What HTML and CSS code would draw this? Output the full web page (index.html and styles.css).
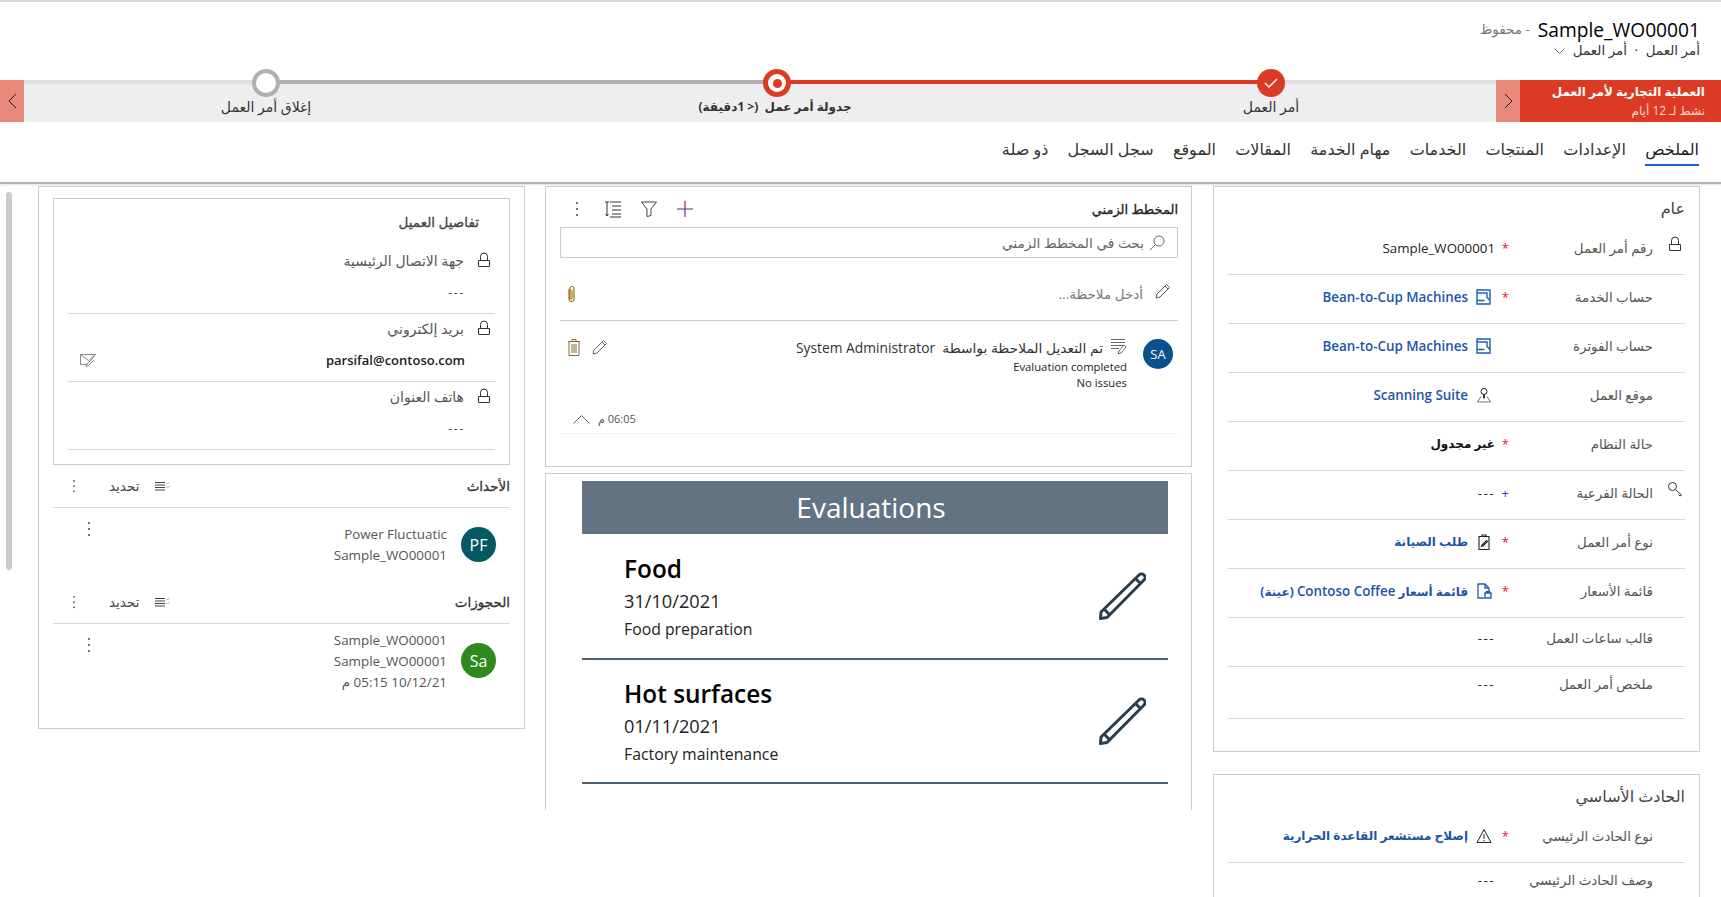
FILE: index.html
```html
<!DOCTYPE html>
<html lang="ar" dir="rtl">
<head>
    <meta charset="UTF-8">
    <title>Sample_WO00001</title>
    <link rel="stylesheet" href="styles.css">
</head>
<body>

<svg class="sprites" width="0" height="0" aria-hidden="true">
  <symbol id="i-lock" viewBox="0 0 16 16"><path d="M2.500 8.500h11v6h-11zM4.500 8.500V4.500a3.500 3.500 0 0 1 7 0v4" fill="none" stroke="currentColor"/></symbol>
  <symbol id="i-account" viewBox="0 0 16 16"><path d="M1 1h13v14H1zM1 4h10v4.500l3.500 3.500M1 11.500h7.500" fill="none" stroke="currentColor" stroke-width="1.400"/></symbol>
  <symbol id="i-pin" viewBox="0 0 16 16"><circle cx="8" cy="4.500" r="3" fill="none" stroke="currentColor"/><path d="M8 7.500v4" stroke="currentColor" stroke-width="1.800"/><path d="M5 9.500 1.500 15h13L11 9.500" fill="none" stroke="#777"/></symbol>
  <symbol id="i-key" viewBox="0 0 16 16"><circle cx="5.500" cy="5.500" r="4" fill="none" stroke="currentColor"/><path d="m8.500 8.500 6 5.500-1.500 1-1.500-1.500" fill="none" stroke="currentColor"/></symbol>
  <symbol id="i-clip" viewBox="0 0 16 16"><path d="M3 2.500h10v13H3zM6 2.500V1h4v1.500M6 11l4.500-4.500 1 1L7 12l-1.500.5z" fill="none" stroke="currentColor" stroke-width="1.100"/></symbol>
  <symbol id="i-price" viewBox="0 0 16 16"><path d="M8 15H2V1h7l4 4v3M9 1v4h4" fill="none" stroke="currentColor" stroke-width="1.300"/><path d="M9 10h6v5H9zM10.500 10V8.500h3V10" fill="none" stroke="currentColor" stroke-width="1.400"/></symbol>
  <symbol id="i-warn" viewBox="0 0 16 16"><path d="M8 1.500 15 14.500H1zM8 6v5M8 12v1.300" fill="none" stroke="currentColor"/></symbol>
  <symbol id="i-pencil" viewBox="0 0 16 16"><path d="M11.500 1.500 14.500 4.500 5 14l-4 1 1-4zM10 3l3 3" fill="none" stroke="currentColor"/></symbol>
  <symbol id="i-bigpencil" viewBox="0 0 48 48"><path d="M41 3a3.500 3.500 0 0 1 5 5L9 45.500 2.500 46.500 3 40zM37.500 6.500l5 5M6.500 37.500l5 5" fill="none" stroke="currentColor" stroke-width="3" stroke-linejoin="round"/></symbol>
  <symbol id="i-list" viewBox="0 0 15 11"><path d="M0 1.500h10M0 4h10M0 6.500h10M0 9h10" stroke="currentColor"/><path d="m11.500 2 1 1 2-2M11.500 6l1 1 2-2" fill="none" stroke="#999" stroke-width=".8"/></symbol>
  <symbol id="i-dots" viewBox="0 0 4 16"><circle cx="2" cy="2" r="1"/><circle cx="2" cy="8" r="1"/><circle cx="2" cy="14" r="1"/></symbol>
</svg>

<div class="top-line"></div>

<header class="record-head">
  <div class="record-title"><h1>Sample_WO00001</h1><span class="saved">- محفوظ</span></div>
  <div class="record-sub">أمر العمل <span class="sep">·</span> أمر العمل
    <svg class="sub-chev" width="11" height="7" viewBox="0 0 11 7"><path d="m.5.500 5 5 5-5" fill="none" stroke="#777"/></svg>
  </div>
</header>

<section class="process">
  <div class="process-name">
    <strong>العملية التجارية لأمر العمل</strong>
    <span>نشط لـ 12 أيام</span>
  </div>
  <button type="button" class="process-btn"><svg width="9" height="16" viewBox="0 0 9 16"><path d="m1 1 7 7-7 7" fill="none" stroke="#222"/></svg></button>
  <div class="track">
    <div class="stage stage-done">
      <span class="node node-done"><svg width="14" height="10" viewBox="0 0 14 10"><path d="m1 5 4 4 8-8" fill="none" stroke="#fff" stroke-width="1.400"/></svg></span>
      <span class="stage-label">أمر العمل</span>
    </div>
    <div class="stage stage-active">
      <span class="node node-active"></span>
      <span class="stage-label stage-label-bold">جدولة أمر عمل&nbsp; (&lt; 1دقيقة)</span>
    </div>
    <div class="stage stage-next">
      <span class="node node-next"></span>
      <span class="stage-label">إغلاق أمر العمل</span>
    </div>
  </div>
  <button type="button" class="process-btn process-btn-end"><svg width="9" height="16" viewBox="0 0 9 16"><path d="m8 1-7 7 7 7" fill="none" stroke="#222"/></svg></button>
</section>

<nav class="tabs">
  <a class="tab tab-on">الملخص</a>
  <a class="tab">الإعدادات</a>
  <a class="tab">المنتجات</a>
  <a class="tab">الخدمات</a>
  <a class="tab">مهام الخدمة</a>
  <a class="tab">المقالات</a>
  <a class="tab">الموقع</a>
  <a class="tab">سجل السجل</a>
  <a class="tab">ذو صلة</a>
</nav>

<div class="scroll-thumb"></div>

<main class="columns">

  <div class="col col-form">
    <section class="card card-general">
      <h2 class="card-title">عام</h2>
      <div class="row"><svg class="row-icon"><use href="#i-lock"/></svg><label>رقم أمر العمل</label><i class="req">*</i><span class="val">Sample_WO00001</span></div>
      <div class="row"><span class="row-icon"></span><label>حساب الخدمة</label><i class="req">*</i><span class="val"><svg class="link-icon icon-blue"><use href="#i-account"/></svg><a class="link">Bean-to-Cup Machines</a></span></div>
      <div class="row"><span class="row-icon"></span><label>حساب الفوترة</label><i class="req"></i><span class="val"><svg class="link-icon icon-blue"><use href="#i-account"/></svg><a class="link">Bean-to-Cup Machines</a></span></div>
      <div class="row"><span class="row-icon"></span><label>موقع العمل</label><i class="req"></i><span class="val"><svg class="link-icon"><use href="#i-pin"/></svg><a class="link">Scanning Suite</a></span></div>
      <div class="row"><span class="row-icon"></span><label>حالة النظام</label><i class="req">*</i><span class="val val-bold">غير مجدول</span></div>
      <div class="row"><svg class="row-icon"><use href="#i-key"/></svg><label>الحالة الفرعية</label><i class="req req-blue">+</i><span class="val dash">---</span></div>
      <div class="row"><span class="row-icon"></span><label>نوع أمر العمل</label><i class="req">*</i><span class="val"><svg class="link-icon"><use href="#i-clip"/></svg><a class="link link-ar">طلب الصيانة</a></span></div>
      <div class="row"><span class="row-icon"></span><label>قائمة الأسعار</label><i class="req">*</i><span class="val"><svg class="link-icon icon-blue"><use href="#i-price"/></svg><a class="link link-ar">قائمة أسعار <span class="link-lat">Contoso Coffee</span> (عينة)</a></span></div>
      <div class="row row-high"><span class="row-icon"></span><label>قالب ساعات العمل</label><i class="req"></i><span class="val dash">---</span></div>
      <div class="row row-higher"><span class="row-icon"></span><label>ملخص أمر العمل</label><i class="req"></i><span class="val dash">---</span></div>
    </section>

    <section class="card card-incident">
      <h2 class="card-title">الحادث الأساسي</h2>
      <div class="row"><span class="row-icon"></span><label>نوع الحادث الرئيسي</label><i class="req">*</i><span class="val"><svg class="link-icon"><use href="#i-warn"/></svg><a class="link link-ar">إصلاح مستشعر القاعدة الحرارية</a></span></div>
      <div class="row row-higher"><span class="row-icon"></span><label>وصف الحادث الرئيسي</label><i class="req"></i><span class="val dash">---</span></div>
    </section>
  </div>

  <div class="col">
    <section class="card card-timeline">
      <div class="tl-head">
        <h3>المخطط الزمني</h3>
        <div class="tl-tools">
          <svg width="18" height="18" viewBox="0 0 18 18"><path d="M9 1v16" stroke="#8a1c7c" stroke-width="1.200"/><path d="M1 9h16" stroke="#5a5a8a" stroke-width="1.200"/></svg>
          <svg width="18" height="18" viewBox="0 0 18 18"><path d="M1.500 2h15L11 9v6.500l-4 1V9z" fill="none" stroke="#444"/></svg>
          <svg width="18" height="18" viewBox="0 0 18 18"><path d="M6 2h11M8 6h9M8 10h9M8 14h9M6 17h11M1 2h4M3 2v14M1.500 14 3 16l1.500-2" fill="none" stroke="#333"/></svg>
          <svg class="dots" width="4" height="16"><use href="#i-dots"/></svg>
        </div>
      </div>
      <div class="tl-search">
        <svg width="16" height="16" viewBox="0 0 16 16"><circle cx="10" cy="6" r="5" fill="none" stroke="#666"/><path d="M6.500 9.500 1 15" stroke="#666"/></svg>
        <span>بحث في المخطط الزمني</span>
      </div>
      <div class="tl-note">
        <svg class="tl-note-pen" width="16" height="18"><use href="#i-pencil"/></svg>
        <span>أدخل ملاحظة...</span>
        <svg class="tl-note-clip" width="9" height="18" viewBox="0 0 9 18"><path d="M2 4v10a2.500 2.500 0 0 0 5 0V3.500a2 2 0 0 0-4 0V13a1 1 0 0 0 2 0V5" fill="none" stroke="#a8741a" stroke-width="1.200"/></svg>
      </div>
      <div class="tl-entry">
        <span class="avatar avatar-sm avatar-blue">SA</span>
        <div class="tl-entry-body">
          <div class="tl-entry-top">
            <svg width="16" height="18" viewBox="0 0 16 18"><path d="M0 1.500h14M0 4.500h14M0 7.500h12M0 10.500h8" stroke="#666"/><path d="m13 7 2 2-5 6-3 1 1-3z" fill="none" stroke="#666"/></svg>
            <p class="tl-entry-text">تم التعديل الملاحظة بواسطة&nbsp; System Administrator</p>
            <span class="tl-actions">
              <svg width="16" height="18"><use href="#i-pencil"/></svg>
              <svg width="14" height="18" viewBox="0 0 14 18"><path d="M1 3.500h12M2 3.500v14h10v-14M5 3.500V1.500h4v2M5 6v9M7 6v9M9 6v9" fill="none" stroke="#8a6a3a"/></svg>
            </span>
          </div>
          <p class="tl-small">Evaluation completed</p>
          <p class="tl-small">No issues</p>
          <div class="tl-time"><span>06:05 م</span>
            <svg width="17" height="10" viewBox="0 0 17 10"><path d="m.5 9.500 8-8 8 8" fill="none" stroke="#666"/></svg>
          </div>
        </div>
      </div>
    </section>

    <section class="card card-evals" dir="ltr">
      <div class="evals-head">Evaluations</div>
      <div class="eval">
        <div class="eval-text">
          <div class="eval-name">Food</div>
          <div class="eval-date">31/10/2021</div>
          <div class="eval-desc">Food preparation</div>
        </div>
        <svg class="eval-pen"><use href="#i-bigpencil"/></svg>
      </div>
      <div class="eval">
        <div class="eval-text">
          <div class="eval-name">Hot surfaces</div>
          <div class="eval-date">01/11/2021</div>
          <div class="eval-desc">Factory maintenance</div>
        </div>
        <svg class="eval-pen"><use href="#i-bigpencil"/></svg>
      </div>
    </section>
  </div>

  <div class="col">
    <section class="card card-side">
      <div class="customer">
        <h3>تفاصيل العميل</h3>
        <div class="cust-field">
          <div class="cust-label"><svg class="cust-lock"><use href="#i-lock"/></svg>جهة الاتصال الرئيسية</div>
          <div class="cust-val dash">---</div>
        </div>
        <div class="cust-field">
          <div class="cust-label"><svg class="cust-lock"><use href="#i-lock"/></svg>بريد إلكتروني</div>
          <div class="cust-val cust-mail"><b>parsifal@contoso.com</b>
            <svg width="16" height="13" viewBox="0 0 16 13"><path d="M.5.500h15l-7 6zM.5.500v10h7M15.500.500 12 5M14 6l-6 6-2 .500.500-2 6-6" fill="none" stroke="#888"/></svg>
          </div>
        </div>
        <div class="cust-field">
          <div class="cust-label"><svg class="cust-lock"><use href="#i-lock"/></svg>هاتف العنوان</div>
          <div class="cust-val dash">---</div>
        </div>
      </div>

      <div class="sub-head">
        <h3>الأحداث</h3>
        <span class="sub-tools"><svg width="15" height="11"><use href="#i-list"/></svg><span>تحديد</span><svg class="dots" width="4" height="14"><use href="#i-dots"/></svg></span>
      </div>
      <div class="sub-item sub-item-events">
        <span class="avatar avatar-teal">PF</span>
        <div class="sub-lines"><p>Power Fluctuatic</p><p>Sample_WO00001</p></div>
        <svg class="dots item-dots" width="4" height="16"><use href="#i-dots"/></svg>
      </div>

      <div class="sub-head">
        <h3>الحجوزات</h3>
        <span class="sub-tools"><svg width="15" height="11"><use href="#i-list"/></svg><span>تحديد</span><svg class="dots" width="4" height="14"><use href="#i-dots"/></svg></span>
      </div>
      <div class="sub-item sub-item-bookings">
        <span class="avatar avatar-green">Sa</span>
        <div class="sub-lines"><p>Sample_WO00001</p><p>Sample_WO00001</p><p>10/12/21 05:15 م</p></div>
        <svg class="dots item-dots" width="4" height="16"><use href="#i-dots"/></svg>
      </div>
    </section>
  </div>

</main>

</body>
</html>
```
FILE: styles.css
```css
* {
	box-sizing: border-box;
}
body {
	margin: 0;
	height: 897px;
	overflow: hidden;
	position: relative;
	background: white;
	color: #333;
	font-family: "Open Sans", "Noto Sans", "DejaVu Sans", sans-serif;
	font-size: 13.5px;
}
h1, h2, h3, p {
	margin: 0;
	font-weight: normal;
}
.sprites {
	position: absolute;
}
.top-line {
	height: 2px;
	background: #d9d9d9;
}

/* title */
.record-head {
	height: 78px;
	padding: 15px 21px 0;
}
.record-title {
	display: flex;
	align-items: center;
	gap: 8px;
	height: 24px;
}
.record-title h1 {
	font-size: 19.200px;
	color: black;
}
.saved {
	color: #777;
	font-size: 13.500px;
}
.record-sub {
	font-size: 13.500px;
	color: #333;
}
.sep {
	margin: 0 4px;
}
.sub-chev {
	margin-right: 4px;
}

/* process bar */
.process {
	display: flex;
	height: 42px;
	background: #eee;
}
.process-name {
	flex: 0 0 201px;
	display: flex;
	flex-direction: column;
	padding: 1px 16px 0 0;
	background: #dc3a24;
	color: #ffd6cf;
	font-size: 12px;
}
.process-name strong {
	font-size: 12px;
	line-height: 21px;
	color: white;
}
.process-btn {
	flex: 0 0 24px;
	display: flex;
	align-items: center;
	justify-content: center;
	margin: 0;
	padding: 0;
	border: none;
	background: #e9897c;
}
.process-btn-end {
	margin-right: auto;
}
.track {
	display: flex;
	flex: 0 0 1472px;
	background: linear-gradient(#e0e0e0, #e0e0e0) top / 100% 4px no-repeat;
}
.stage {
	display: flex;
	flex-direction: column;
	align-items: center;
	background-size: 100% 4px;
	background-repeat: no-repeat;
	background-position: top;
}
.stage-done {
	flex: 0 0 450px;
	background-image: linear-gradient(to left, #e0e0e0 50%, #dc3a24 50%);
}
.stage-active {
	flex: 0 0 538px;
	background-image: linear-gradient(to left, #dc3a24 50%, #b0b0b0 50%);
}
.stage-next {
	flex: 0 0 484px;
	background-image: linear-gradient(to left, #b0b0b0 50%, #e0e0e0 50%);
}
.node {
	display: flex;
	align-items: center;
	justify-content: center;
	width: 28px;
	height: 28px;
	margin-top: -11px;
	border-radius: 50%;
	flex: none;
}
.node-done {
	background: #dc3a24;
}
.node-active {
	border: 5px solid #dc3a24;
	background: white;
}
.node-active::after {
	content: "";
	width: 9px;
	height: 9px;
	border-radius: 50%;
	background: #dc3a24;
}
.node-next {
	border: 4px solid #b0b0b0;
	background: white;
}
.stage-label {
	font-size: 14px;
	line-height: 20px;
	color: #333;
}
.stage-label-bold {
	margin-right: 4px;
	font-size: 12px;
	font-weight: 700;
}

/* tabs */
.tabs {
	display: flex;
	gap: 19.300px;
	height: 62px;
	padding: 11px 22px 0;
	border-bottom: 2px solid #b5b5b5;
	box-shadow: 0 1px 2px #ddd;
}
.tab {
	height: 33px;
	font-size: 16px;
	line-height: 32px;
	color: #333;
}
.tab-on {
	border-bottom: 2px solid #1f5fd6;
	color: #222;
}

/* columns */
.scroll-thumb {
	position: absolute;
	left: 6px;
	top: 192px;
	width: 6px;
	height: 378px;
	border-radius: 3px;
	background: #ccc;
}
.columns {
	display: grid;
	grid-template-columns: 488px 647px 487px;
	gap: 20px;
	height: 713px;
	overflow: hidden;
	padding: 2px 21px 0 38px;
}
.col {
	display: flex;
	flex-direction: column;
}
.col-form {
	padding-left: 1px;
}
.card {
	border: 1px solid #ccc;
	background: white;
}

/* general form */
.card-general {
	height: 566px;
	padding: 0 14px;
}
.card-title {
	height: 39px;
	padding-top: 8px;
	font-size: 16px;
	line-height: 26px;
	color: #444;
}
.row {
	display: grid;
	grid-template-columns: 32px 144px 14px 1fr;
	height: 49px;
	padding-top: 12px;
	border-bottom: 1px solid #d8d8d8;
	line-height: 20px;
}
.row-high {
	padding-top: 10px;
}
.row-higher {
	height: 52px;
	padding-top: 7px;
}
.row-icon {
	width: 16px;
	height: 16px;
	margin: -2px 2px 0 0;
	color: #333;
}
.row label {
	color: #555;
	font-size: 13.400px;
}
.req {
	font-style: normal;
	color: #e02020;
	font-size: 13px;
}
.req-blue {
	color: #1a3fd0;
}
.val {
	display: flex;
	align-items: center;
	gap: 8px;
	height: 20px;
	color: #222;
	font-size: 13.300px;
}
.val-bold {
	font-size: 12px;
	font-weight: 700;
	color: #111;
}
.dash {
	letter-spacing: 1.500px;
}
.link {
	color: #1d55a8;
	font-weight: 600;
	font-size: 13.400px;
}
.link-ar {
	font-size: 12px;
	font-weight: 700;
}
.link-lat {
	font-size: 13.400px;
	font-weight: 600;
}
.link-icon {
	width: 16px;
	height: 16px;
	margin-right: 3px;
	color: #222;
}
.icon-blue {
	color: #1d5db5;
}
.card-incident {
	margin-top: 22px;
	flex: 1;
	padding: 0 14px;
}

/* timeline */
.card-timeline {
	height: 281px;
	padding: 0 13px 0 14px;
}
.tl-head {
	display: flex;
	justify-content: space-between;
	align-items: center;
	height: 40px;
	padding-top: 3px;
}
.tl-head h3 {
	font-size: 13px;
	-webkit-text-stroke: .3px #222;
	color: #222;
}
.tl-tools {
	display: flex;
	align-items: center;
	gap: 18px;
	padding-left: 15px;
}
.tl-tools .dots {
	margin-right: 7px;
}
.dots {
	fill: #444;
}
.tl-search {
	display: flex;
	align-items: center;
	gap: 5px;
	height: 31px;
	padding: 0 12px;
	border: 1px solid #ccc;
	color: #666;
	font-size: 13.700px;
}
.tl-note {
	display: flex;
	align-items: center;
	height: 63px;
	padding: 4px 7px 0 7px;
	border-bottom: 1px solid #ccc;
	color: #777;
	font-size: 13.500px;
}
.tl-note span {
	padding-top: 5px;
}
.tl-note-pen {
	color: #555;
	margin-left: 12px;
}
.tl-note-clip {
	margin: 6px auto 0 0;
}
.tl-entry {
	display: flex;
	gap: 16px;
	height: 113px;
	padding: 18px 5px 0 7px;
	border-bottom: 1px solid #eee;
}
.avatar {
	display: flex;
	align-items: center;
	justify-content: center;
	width: 35px;
	height: 35px;
	border-radius: 50%;
	flex: none;
	color: white;
	font-size: 16px;
}
.avatar-sm {
	width: 30px;
	height: 30px;
	font-size: 13px;
}
.avatar-blue {
	background: #0b4f8c;
}
.avatar-teal {
	background: #045a62;
}
.avatar-green {
	background: #2f8a1d;
}
.tl-entry-body {
	flex: 1;
	margin-top: -2px;
}
.tl-entry-top {
	display: flex;
	align-items: center;
	gap: 8px;
	height: 20px;
}
.tl-entry-text {
	color: #333;
	font-size: 13.800px;
}
.tl-actions {
	display: flex;
	align-items: center;
	gap: 11px;
	margin-right: auto;
	color: #666;
}
.tl-small {
	font-size: 11.300px;
	line-height: 16px;
	color: #222;
}
.tl-small:first-of-type {
	margin-top: 2px;
}
.tl-time {
	display: flex;
	align-items: center;
	gap: 8px;
	margin-top: 20px;
	padding-left: 6px;
	justify-content: flex-end;
	font-size: 11px;
	color: #555;
}

/* canvas app */
.card-evals {
	margin-top: 6px;
	height: 337px;
	padding: 7px 23px 7px 36px;
	border-bottom: none;
	font-family: "Open Sans", sans-serif;
	color: black;
}
.evals-head {
	height: 53px;
	padding-right: 8px;
	background: #637382;
	color: white;
	font-size: 28px;
	line-height: 52px;
	text-align: center;
}
.eval {
	display: flex;
	align-items: center;
	justify-content: space-between;
	height: 124px;
	padding: 0 22px 0 42px;
	border-bottom: 2px solid #4f6272;
}
.evals-head + .eval {
	height: 126px;
}
.eval-name {
	padding-top: 1px;
	font-size: 24.400px;
	font-weight: 600;
	line-height: 34px;
}
.eval-date {
	font-size: 18.200px;
	line-height: 30px;
	color: #222;
}
.eval-desc {
	font-size: 15.800px;
	line-height: 26px;
	color: #222;
}
.eval-pen {
	width: 48px;
	height: 48px;
	color: #2a3d4d;
}

/* left column */
.card-side {
	height: 543px;
	padding: 11px 14px 0;
}
.customer {
	height: 267px;
	padding: 0 14px;
	border: 1px solid #ccc;
}
.customer h3 {
	height: 47px;
	padding: 14px 16px 0 0;
	font-size: 13.500px;
	-webkit-text-stroke: .3px #444;
	color: #444;
}
.cust-field {
	height: 68px;
	border-bottom: 1px solid #d8d8d8;
}
.cust-label {
	display: flex;
	align-items: center;
	gap: 12px;
	height: 28px;
	padding-right: 3px;
	color: #555;
	font-size: 14px;
}
.cust-lock {
	width: 16px;
	height: 16px;
	color: #333;
}
.cust-val {
	display: flex;
	align-items: center;
	justify-content: space-between;
	margin-top: 7px;
	padding: 0 30px 0 12px;
	line-height: 22px;
	font-size: 13px;
	color: #555;
}
.cust-mail b {
	font-weight: 600;
	color: #222;
}
.sub-head {
	display: flex;
	justify-content: space-between;
	align-items: center;
	height: 43px;
	border-bottom: 1px solid #d8d8d8;
}
.sub-head h3 {
	font-size: 13.500px;
	-webkit-text-stroke: .3px #333;
	color: #333;
}
.sub-tools {
	display: flex;
	align-items: center;
	gap: 16px;
	padding-left: 19px;
	font-size: 13.500px;
	color: #444;
}
.sub-tools .dots {
	margin-right: 17px;
}
.sub-item {
	display: flex;
	height: 73px;
	padding: 19px 14px 0 34px;
	gap: 14px;
}
.sub-lines {
	flex: 1;
	font-size: 13.400px;
	line-height: 21px;
	color: #555;
}
.sub-item-events .sub-lines {
	margin-top: -3px;
}
.sub-item-bookings .sub-lines {
	margin-top: -13px;
}
.item-dots {
	margin-top: -6px;
}
```
